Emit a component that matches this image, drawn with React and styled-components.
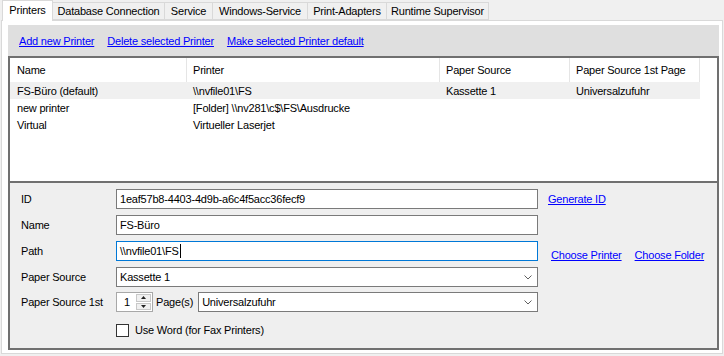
import React from 'react';
import styled, { createGlobalStyle } from 'styled-components';

const GlobalStyle = createGlobalStyle`
  html, body { margin: 0; padding: 0; background: #f0f0f0; }
  body { font-family: "Liberation Sans", Arial, sans-serif; font-size: 11px; letter-spacing: -0.2px; color: #000; }
  #root { width: 724px; height: 356px; overflow: hidden; }
  * { box-sizing: border-box; }
`;

const Window = styled.div`
  width: 724px;
  height: 356px;
  display: flex;
  flex-direction: column;
  padding: 0 1px 2px 1px;
`;

const TabStrip = styled.div`
  height: 20px;
  display: flex;
  align-items: flex-end;
  padding-left: 2px;
  position: relative;
  z-index: 2;
`;

const Tab = styled.div`
  width: ${p => p.$w}px;
  height: ${p => (p.$active ? 21 : 18)}px;
  margin-left: -1px;
  margin-bottom: ${p => (p.$active ? -1 : 0)}px;
  border: 1px solid #d9d9d9;
  border-bottom: ${p => (p.$active ? 'none' : '1px solid #d9d9d9')};
  background: ${p => (p.$active ? '#ffffff' : '#f0f0f0')};
  display: flex;
  align-items: center;
  justify-content: center;
  padding-bottom: ${p => (p.$active ? 2 : 0)}px;
  white-space: nowrap;
  position: relative;
  z-index: ${p => (p.$active ? 1 : 0)};
`;

const Page = styled.div`
  flex: 1;
  border: 1px solid #d9d9d9;
  background: #ffffff;
  padding: 4px 3px 3px 6px;
  display: flex;
  flex-direction: column;
`;

const Toolbar = styled.div`
  height: 31px;
  background: #dfdfdf;
  display: flex;
  align-items: center;
  gap: 13px;
  padding-left: 11px;
`;

const Link = styled.span`
  color: #0000ff;
  text-decoration: underline;
  white-space: nowrap;
  cursor: pointer;
  margin-left: ${p => p.$ml || 0}px;
  margin-top: ${p => p.$mt || 0}px;
`;

const Frame = styled.div`
  flex: 1;
  border: 2px solid #707070;
  display: flex;
  flex-direction: column;
`;

const ListArea = styled.div`
  height: 125px;
  flex: none;
  background: #ffffff;
  border-bottom: 2px solid #707070;
`;

const GridRow = styled.div`
  display: grid;
  grid-template-columns: 177px 253px 130px 130px;
  width: 690px;
  height: ${p => (p.$header ? 24 : 17)}px;
  background: ${p => (p.$selected ? '#f0f0f0' : 'transparent')};
`;

const HeaderCell = styled.div`
  display: flex;
  align-items: center;
  padding-left: ${p => (p.$first ? 7 : 6)}px;
  border-right: 1px solid #e5e5e5;
  white-space: nowrap;
`;

const Cell = styled.div`
  display: flex;
  align-items: center;
  padding-left: ${p => (p.$first ? 7 : 6)}px;
  white-space: nowrap;
  overflow: hidden;
`;

const Panel = styled.div`
  flex: 1;
  background: #efefef;
  padding: 6px 0 0 11px;
  display: flex;
  flex-direction: column;
  gap: 6px;
`;

const FormRow = styled.div`
  display: flex;
  align-items: center;
  height: ${p => p.$h || 20}px;
  margin-top: ${p => p.$mt || 0}px;
`;

const Label = styled.div`
  width: 95px;
  flex: none;
  white-space: nowrap;
`;

const TextBox = styled.div`
  width: ${p => p.$w || 422}px;
  height: 20px;
  flex: none;
  background: #ffffff;
  border: 1px solid ${p => (p.$focus ? '#0078d7' : '#7a7a7a')};
  display: flex;
  align-items: center;
  padding-left: 3px;
  position: relative;
  white-space: nowrap;
`;

const Caret = styled.span`
  display: inline-block;
  width: 1px;
  height: 14px;
  background: #000;
  margin-left: 1px;
`;

const Chevron = styled.svg`
  position: absolute;
  right: 5px;
  top: 7px;
`;

const Spinner = styled.div`
  width: 37px;
  height: 20px;
  flex: none;
  background: #ffffff;
  border: 1px solid #a8a8a8;
  display: flex;
  align-items: center;
  padding-left: 7px;
  position: relative;
`;

const SpinButtons = styled.div`
  position: absolute;
  right: 1px;
  top: 1px;
  bottom: 1px;
  width: 15px;
  display: flex;
  flex-direction: column;
  gap: 1px;
`;

const SpinButton = styled.div`
  flex: 1;
  background: #f0f0f0;
  border: 1px solid #c8c8c8;
  display: flex;
  align-items: center;
  justify-content: center;
`;

const PageLabel = styled.span`
  margin: 0 5px 0 3px;
  white-space: nowrap;
`;

const Check = styled.div`
  width: 13px;
  height: 13px;
  border: 1px solid #333333;
  background: #ffffff;
  flex: none;
`;

const CheckLabel = styled.span`
  margin-left: 6px;
  white-space: nowrap;
`;

const Spacer = styled.div`
  width: 95px;
  flex: none;
`;

const tabs = [
  ['Printers', 51, true],
  ['Database Connection', 113],
  ['Service', 49],
  ['Windows-Service', 96],
  ['Print-Adapters', 80],
  ['Runtime Supervisor', 103],
];

const rows = [
  ['FS-Büro (default)', '\\\\nvfile01\\FS', 'Kassette 1', 'Universalzufuhr', true],
  ['new printer', '[Folder] \\\\nv281\\c$\\FS\\Ausdrucke', '', ''],
  ['Virtual', 'Virtueller Laserjet', '', ''],
];

const ChevronIcon = () => (
  <Chevron width="8" height="5" viewBox="0 0 8 5">
    <polyline points="0.5,0.5 4,4 7.5,0.5" fill="none" stroke="#606060" strokeWidth="1" />
  </Chevron>
);

const Select = ({ value, w }) => (
  <TextBox $w={w}>
    {value}
    <ChevronIcon />
  </TextBox>
);

export default function App() {
  return (
    <>
      <GlobalStyle />
      <Window>
        <TabStrip>
          {tabs.map(([t, w, a]) => (
            <Tab key={t} $w={w} $active={a}>{t}</Tab>
          ))}
        </TabStrip>
        <Page>
          <Toolbar>
            <Link>Add new Printer</Link>
            <Link>Delete selected Printer</Link>
            <Link>Make selected Printer default</Link>
          </Toolbar>
          <Frame>
            <ListArea>
              <GridRow $header>
                <HeaderCell $first>Name</HeaderCell>
                <HeaderCell>Printer</HeaderCell>
                <HeaderCell>Paper Source</HeaderCell>
                <HeaderCell>Paper Source 1st Page</HeaderCell>
              </GridRow>
              {rows.map(r => (
                <GridRow key={r[0]} $selected={r[4]}>
                  <Cell $first>{r[0]}</Cell>
                  <Cell>{r[1]}</Cell>
                  <Cell>{r[2]}</Cell>
                  <Cell>{r[3]}</Cell>
                </GridRow>
              ))}
            </ListArea>
            <Panel>
              <FormRow>
                <Label>ID</Label>
                <TextBox>1eaf57b8-4403-4d9b-a6c4f5acc36fecf9</TextBox>
                <Link $ml={10}>Generate ID</Link>
              </FormRow>
              <FormRow>
                <Label>Name</Label>
                <TextBox>FS-Büro</TextBox>
              </FormRow>
              <FormRow>
                <Label>Path</Label>
                <TextBox $focus>\\nvfile01\FS<Caret /></TextBox>
                <Link $ml={13} $mt={8}>Choose Printer</Link>
                <Link $ml={13} $mt={8}>Choose Folder</Link>
              </FormRow>
              <FormRow>
                <Label>Paper Source</Label>
                <Select value="Kassette 1" w={422} />
              </FormRow>
              <FormRow $mt={-1}>
                <Label>Paper Source 1st</Label>
                <Spinner>
                  1
                  <SpinButtons>
                    <SpinButton>
                      <svg width="5" height="3" viewBox="0 0 5 3"><polygon points="2.5,0 5,3 0,3" fill="#202020" /></svg>
                    </SpinButton>
                    <SpinButton>
                      <svg width="5" height="3" viewBox="0 0 5 3"><polygon points="0,0 5,0 2.5,3" fill="#202020" /></svg>
                    </SpinButton>
                  </SpinButtons>
                </Spinner>
                <PageLabel>Page(s)</PageLabel>
                <Select value="Universalzufuhr" w={340} />
              </FormRow>
              <FormRow $mt={2}>
                <Spacer />
                <Check />
                <CheckLabel>Use Word (for Fax Printers)</CheckLabel>
              </FormRow>
            </Panel>
          </Frame>
        </Page>
      </Window>
    </>
  );
}
